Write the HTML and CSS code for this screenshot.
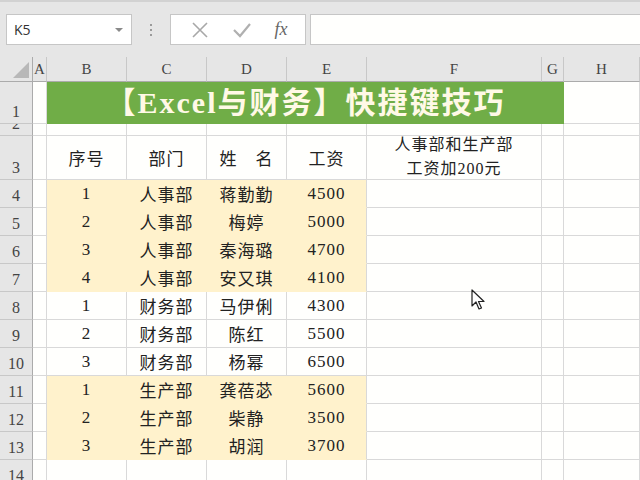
FILE: index.html
```html
<!DOCTYPE html>
<html lang="zh">
<head>
  <meta charset="UTF-8" />
  <title>Excel与财务</title>
  <link rel="stylesheet" href="styles.css">
</head>
<body>
  <div class="toolbar">
    <div class="namebox"><span>K5</span><span class="caret"></span></div>
    <div class="grip"><i></i><i></i><i></i></div>
    <div class="fxbtns">
      <svg width="18" height="18" viewBox="0 0 18 18"><path d="M2 2L16 16M16 2L2 16" stroke="#a8a8a8" stroke-width="1.6" fill="none"/></svg>
      <svg width="20" height="18" viewBox="0 0 20 18"><path d="M2 9L8 15L18 3" stroke="#b0b0b0" stroke-width="2.2" fill="none"/></svg>
      <span class="fx">fx</span>
    </div>
    <div class="formula"></div>
  </div>

  <div class="sheet">
    <div class="row colhead">
      <div class="corner"><span class="tri"></span></div>
      <div class="ch">A</div><div class="ch">B</div><div class="ch">C</div><div class="ch">D</div>
      <div class="ch">E</div><div class="ch">F</div><div class="ch">G</div><div class="ch">H</div>
    </div>

    <div class="row r1">
      <div class="rh">1</div><div class="cell"></div>
      <div class="title">【Excel与财务】快捷键技巧</div>
      <div class="cell"></div>
    </div>

    <div class="row r2">
      <div class="rh">2</div><div class="cell"></div><div class="cell"></div><div class="cell"></div>
      <div class="cell"></div><div class="cell"></div><div class="cell"></div><div class="cell"></div><div class="cell"></div>
    </div>

    <div class="row r3">
      <div class="rh">3</div><div class="cell"></div>
      <div class="cell">序号</div><div class="cell">部门</div><div class="cell">姓　名</div><div class="cell">工资</div>
      <div class="cell note"><span>人事部和生产部</span><span>工资加200元</span></div>
      <div class="cell"></div><div class="cell"></div>
    </div>

    <div class="row">
      <div class="rh">4</div><div class="cell"></div>
      <div class="cell y">1</div><div class="cell y">人事部</div><div class="cell y">蒋勤勤</div><div class="cell y last">4500</div>
      <div class="cell"></div><div class="cell"></div><div class="cell"></div>
    </div>
    <div class="row">
      <div class="rh">5</div><div class="cell"></div>
      <div class="cell y">2</div><div class="cell y">人事部</div><div class="cell y">梅婷</div><div class="cell y last">5000</div>
      <div class="cell"></div><div class="cell"></div><div class="cell"></div>
    </div>
    <div class="row">
      <div class="rh">6</div><div class="cell"></div>
      <div class="cell y">3</div><div class="cell y">人事部</div><div class="cell y">秦海璐</div><div class="cell y last">4700</div>
      <div class="cell"></div><div class="cell"></div><div class="cell"></div>
    </div>
    <div class="row">
      <div class="rh">7</div><div class="cell"></div>
      <div class="cell y">4</div><div class="cell y">人事部</div><div class="cell y">安又琪</div><div class="cell y last">4100</div>
      <div class="cell"></div><div class="cell"></div><div class="cell"></div>
    </div>
    <div class="row">
      <div class="rh">8</div><div class="cell"></div>
      <div class="cell">1</div><div class="cell">财务部</div><div class="cell">马伊俐</div><div class="cell">4300</div>
      <div class="cell"></div><div class="cell"></div><div class="cell"></div>
    </div>
    <div class="row">
      <div class="rh">9</div><div class="cell"></div>
      <div class="cell">2</div><div class="cell">财务部</div><div class="cell">陈红</div><div class="cell">5500</div>
      <div class="cell"></div><div class="cell"></div><div class="cell"></div>
    </div>
    <div class="row">
      <div class="rh">10</div><div class="cell"></div>
      <div class="cell">3</div><div class="cell">财务部</div><div class="cell">杨幂</div><div class="cell">6500</div>
      <div class="cell"></div><div class="cell"></div><div class="cell"></div>
    </div>
    <div class="row">
      <div class="rh">11</div><div class="cell"></div>
      <div class="cell y">1</div><div class="cell y">生产部</div><div class="cell y">龚蓓苾</div><div class="cell y last">5600</div>
      <div class="cell"></div><div class="cell"></div><div class="cell"></div>
    </div>
    <div class="row">
      <div class="rh">12</div><div class="cell"></div>
      <div class="cell y">2</div><div class="cell y">生产部</div><div class="cell y">柴静</div><div class="cell y last">3500</div>
      <div class="cell"></div><div class="cell"></div><div class="cell"></div>
    </div>
    <div class="row">
      <div class="rh">13</div><div class="cell"></div>
      <div class="cell y">3</div><div class="cell y">生产部</div><div class="cell y">胡润</div><div class="cell y last">3700</div>
      <div class="cell"></div><div class="cell"></div><div class="cell"></div>
    </div>
    <div class="row">
      <div class="rh">14</div><div class="cell"></div><div class="cell"></div><div class="cell"></div>
      <div class="cell"></div><div class="cell"></div><div class="cell"></div><div class="cell"></div><div class="cell"></div>
    </div>
  </div>

  <svg class="cursor" width="14" height="22" viewBox="0 0 14 22">
    <path d="M1 1L1 17L5 13L8 20L10.5 19L7.5 12.5L13 12.5Z" fill="#fff" stroke="#222" stroke-width="1.2" stroke-linejoin="round"/>
  </svg>
</body>
</html>
```

FILE: styles.css
```css
body {
  margin: 0;
  width: 640px;
  height: 480px;
  overflow: hidden;
  background: #fffffd;
  font-family: "Liberation Serif", "Noto Sans CJK SC", serif;
  color: #222;
}

/* ---- formula bar ---- */
.toolbar {
  height: 57px;
  box-sizing: border-box;
  background: #e6e6e6;
  border-top: 2px solid #d2d2d2;
  padding-top: 12px;
  display: flex;
  align-items: flex-start;
}

.namebox {
  margin-left: 6px;
  width: 126px;
  height: 31px;
  box-sizing: border-box;
  background: #fff;
  border: 1px solid #c6c6c6;
  display: flex;
  align-items: center;
  justify-content: space-between;
  padding: 0 8px 0 7px;
  font-family: "Open Sans", "Liberation Sans", sans-serif;
  font-size: 14px;
  color: #333;
}

.caret {
  width: 0;
  height: 0;
  border-left: 4px solid transparent;
  border-right: 4px solid transparent;
  border-top: 4px solid #8a8a8a;
}

.grip {
  width: 38px;
  height: 31px;
  display: flex;
  flex-direction: column;
  align-items: center;
  justify-content: center;
  gap: 3px;
}

.grip i {
  width: 2px;
  height: 2px;
  background: #9a9a9a;
}

.fxbtns {
  width: 136px;
  height: 31px;
  box-sizing: border-box;
  background: #fff;
  border: 1px solid #c6c6c6;
  display: flex;
  align-items: center;
  justify-content: space-around;
  padding: 0 6px 0 8px;
}

.fx {
  font-family: "Liberation Serif", serif;
  font-style: italic;
  font-size: 18px;
  color: #666;
}

.formula {
  margin-left: 4px;
  flex: 1;
  height: 31px;
  box-sizing: border-box;
  background: #fffffd;
  border: 1px solid #c6c6c6;
  border-right: none;
}

/* ---- grid ---- */
.row {
  display: grid;
  grid-template-columns: 33px 14px 80px 80px 80px 80px 175px 22px 1fr;
  grid-template-rows: 100%;
  height: 28px;
  overflow: hidden;
}

.colhead { height: 25px; }
.r1 { height: 42px; }
.r2 { height: 12px; }
.r3 { height: 44px; }

.corner,
.ch,
.rh {
  background: #e6e6e6;
  box-sizing: border-box;
  border-right: 1px solid #c8c8c8;
  border-bottom: 1px solid #c8c8c8;
  color: #444;
  overflow: hidden;
}

.corner {
  position: relative;
  border-right-color: #ababab;
  border-bottom-color: #ababab;
}

.tri {
  position: absolute;
  right: 3px;
  bottom: 3px;
  width: 0;
  height: 0;
  border-left: 16px solid transparent;
  border-bottom: 16px solid #b8b8b8;
}

.ch {
  display: flex;
  align-items: center;
  justify-content: center;
  font-size: 15px;
  border-bottom-color: #ababab;
}

.rh {
  display: flex;
  align-items: flex-end;
  justify-content: center;
  font-size: 16px;
  line-height: 18px;
  padding-bottom: 2px;
  border-right-color: #ababab;
}

.cell {
  box-sizing: border-box;
  border-right: 1px solid #d9d9d9;
  border-bottom: 1px solid #d9d9d9;
  display: flex;
  align-items: center;
  justify-content: center;
  font-size: 17px;
  letter-spacing: 1px;
  white-space: nowrap;
  overflow: hidden;
}

.cell.y {
  background: #fff2cc;
  border-color: #fff2cc;
}

.cell.y.last {
  border-right-color: #d9d9d9;
}

.note {
  flex-direction: column;
  line-height: 24px;
  font-size: 16px;
  padding-bottom: 2px;
}

.title {
  grid-column: 3 / 9;
  background: #70ad47;
  color: #fff9e6;
  font-weight: bold;
  font-size: 30px;
  line-height: 1;
  letter-spacing: 2px;
  display: flex;
  align-items: center;
  justify-content: center;
  white-space: nowrap;
  overflow: hidden;
}

.cursor {
  position: absolute;
  left: 471px;
  top: 289px;
}
```
